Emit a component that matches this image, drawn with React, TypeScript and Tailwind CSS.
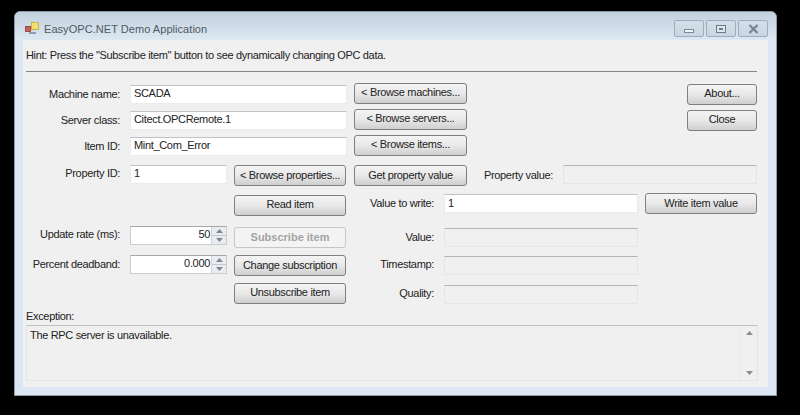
import React from 'react';

const Btn = ({ label, w = 'w-[113px]', top = '', disabled = false, lift = false }: { label: string; w?: string; top?: string; disabled?: boolean; lift?: boolean }) => (
  <div
    className={`${w} ${top} ${lift ? 'pb-[2px]' : ''} h-[21px] shrink-0 rounded-[3px] border flex items-center justify-center whitespace-nowrap ${
      disabled
        ? 'border-[#c4c6c8] bg-[#f3f3f3] text-[#a3a3a3] font-bold tracking-[0px]'
        : 'border-[#7f7f7f] bg-gradient-to-b from-[#f4f4f4] via-[#e8e8e8] to-[#cfcfcf] text-[#222]'
    }`}
  >
    {label}
  </div>
);

const Label = ({ text, w = 'w-[94px]', top = '' }: { text: string; w?: string; top?: string }) => (
  <div className={`${w} ${top} shrink-0 text-right whitespace-nowrap`}>{text}</div>
);

const Input = ({ value, w = 'w-[217px]', top = 'mt-[2px]', ml = 'ml-[10px]', line = 'leading-[17px]' }: { value: string; w?: string; top?: string; ml?: string; line?: string }) => (
  <div className={`${w} ${top} ${ml} ${line} h-[19px] shrink-0 bg-white border border-[#e9ecef] border-t-[#c0c2c5] px-[3px] text-[#222]`}>
    {value}
  </div>
);

const Field = ({ w = 'w-[194px]', top = '', ml = 'ml-[10px]' }: { w?: string; top?: string; ml?: string }) => (
  <div className={`${w} ${top} ${ml} h-[19px] shrink-0 bg-[#f0f0f0] border border-[#e6e6e6] border-t-[#b5b5b5]`} />
);

const Spin = ({ value, top = '' }: { value: string; top?: string }) => (
  <div className={`w-[97px] ${top} ml-[10px] h-[19px] shrink-0 flex bg-white border border-[#c9ccd0] border-t-[#a5a8ac]`}>
    <div className="flex-1 text-right leading-[15px] text-[#222] pr-[1px]">{value}</div>
    <div className="w-[15px] flex flex-col bg-[#e9edf1] border-l border-[#d0d4d8]">
      <div className="flex-1 flex items-center justify-center border-b border-[#c3c8cd]">
        <svg width="7" height="4" viewBox="0 0 7 4"><path d="M3.5 0 7 4H0z" fill="#7d8893" /></svg>
      </div>
      <div className="flex-1 flex items-center justify-center">
        <svg width="7" height="4" viewBox="0 0 7 4"><path d="M0 0h7L3.5 4z" fill="#7d8893" /></svg>
      </div>
    </div>
  </div>
);

const CaptionBtn = ({ children }: { children: React.ReactNode }) => (
  <div className="w-[30px] h-[17px] rounded-[2px] border border-[#9eadbc] bg-gradient-to-b from-[#d3dee8] to-[#c9d7e4] flex items-center justify-center">
    {children}
  </div>
);

export default function App() {
  return (
    <div className="w-[800px] h-[415px] bg-black overflow-hidden pt-[11px] pl-[14px] font-['Liberation_Sans',sans-serif] text-[11px] tracking-[-0.33px] leading-[15px]">
      {/* Window frame */}
      <div className="w-[763px] h-[385px] rounded-t-[6px] bg-[#dce7f3] border border-[#8b98a5] flex flex-col">
        {/* Title bar */}
        <div className="h-[28px] shrink-0 rounded-t-[6px] bg-gradient-to-b from-[#c2d0dd] to-[#dde8f2] flex items-start pl-[10px] pr-[8px]">
          <svg width="16" height="16" viewBox="0 0 16 16" className="mt-[9px] shrink-0">
            <rect x="0.5" y="5.5" width="5" height="5" fill="#c8605a" stroke="#a04a46" strokeWidth="1" />
            <rect x="6.5" y="1.5" width="7" height="7" fill="#efe070" stroke="#c4b44a" strokeWidth="1" />
            <rect x="4" y="11" width="7" height="2" fill="#8c9db8" />
          </svg>
          <div className="ml-[3px] mt-[10px] text-[#4d5965] text-[11px] tracking-[0.05px]">EasyOPC.NET Demo Application</div>
          <div className="ml-auto mt-[8px] flex gap-[2px]">
            <CaptionBtn>
              <div className="w-[10px] h-[4px] mt-[5px] bg-[#f2f5f8] border border-[#7d8996]" />
            </CaptionBtn>
            <CaptionBtn>
              <div className="w-[10px] h-[8px] border border-[#6f7b87] bg-[#dfe6ed] flex items-center justify-center">
                <div className="w-[4px] h-[2px] bg-[#6f7b87]" />
              </div>
            </CaptionBtn>
            <CaptionBtn>
              <svg width="11" height="10" viewBox="0 0 11 10">
                <path d="M1.5 1 9.5 9M9.5 1 1.5 9" stroke="#7a8693" strokeWidth="2.4" />
              </svg>
            </CaptionBtn>
          </div>
        </div>

        {/* Client area */}
        <div className="w-[745px] ml-[8px] h-[347px] shrink-0 bg-[#f0f0f0] pl-[3px] pr-[10px] text-[#222]">
          <div className="pt-[8px] h-[23px]">Hint: Press the "Subscribe item" button to see dynamically changing OPC data.</div>
          <div className="mt-[8px] h-[2px] w-[731px] border-t border-[#858585]" />

          {/* Machine, server, item rows + About / Close */}
          <div className="mt-[10px] flex">
            <div className="w-[441px] shrink-0">
              <div className="h-[26px] flex items-start">
                <Label text="Machine name:" top="mt-[4px]" />
                <Input value="SCADA" line="leading-[15px]" />
                <div className="ml-[7px]"><Btn label="< Browse machines..." lift /></div>
              </div>
              <div className="h-[26px] flex items-start">
                <Label text="Server class:" top="mt-[4px]" />
                <Input value="Citect.OPCRemote.1" line="leading-[15px]" />
                <div className="ml-[7px]"><Btn label="< Browse servers..." lift /></div>
              </div>
              <div className="h-[30px] flex items-start">
                <Label text="Item ID:" top="mt-[4px]" />
                <Input value="Mint_Com_Error" line="leading-[15px]" />
                <div className="ml-[7px]"><Btn label="< Browse items..." lift /></div>
              </div>
            </div>
            <div className="ml-[220px] flex flex-col gap-[5px] pt-[1px]">
              <Btn label="About..." w="w-[70px]" lift />
              <Btn label="Close" w="w-[70px]" lift />
            </div>
          </div>

          {/* Property row */}
          <div className="h-[28px] flex items-start">
            <Label text="Property ID:" top="mt-[1px]" />
            <Input value="1" w="w-[97px]" top="" line="leading-[15px]" />
            <div className="ml-[7px]"><Btn label="< Browse properties..." w="w-[112px]" /></div>
            <div className="ml-[8px]"><Btn label="Get property value" /></div>
            <Label text="Property value:" w="w-[86px]" top="mt-[3px]" />
            <Field top="mt-0" />
          </div>

          {/* Read / write row */}
          <div className="h-[33px] flex items-start">
            <div className="ml-[208px] mt-[2px]"><Btn label="Read item" w="w-[112px]" lift /></div>
            <Label text="Value to write:" w="w-[80px]" top="mt-[3px] ml-[8px]" />
            <Input value="1" w="w-[194px]" top="mt-[1px]" />
            <div className="ml-[7px]"><Btn label="Write item value" w="w-[112px]" /></div>
          </div>

          {/* Subscription rows */}
          <div className="h-[29px] flex items-start">
            <Label text="Update rate (ms):" top="mt-[1px]" />
            <Spin value="50" />
            <div className="ml-[7px] mt-[1px]"><Btn label="Subscribe item" w="w-[112px]" disabled /></div>
            <Label text="Value:" w="w-[80px]" top="mt-[4px] ml-[8px]" />
            <Field top="mt-[2px]" />
          </div>
          <div className="h-[28px] flex items-start">
            <Label text="Percent deadband:" top="mt-[2px]" />
            <Spin value="0.000" />
            <div className="ml-[7px]"><Btn label="Change subscription" w="w-[112px]" /></div>
            <Label text="Timestamp:" w="w-[80px]" top="mt-[2px] ml-[8px]" />
            <Field top="mt-[1px]" />
          </div>
          <div className="h-[30px] flex items-start">
            <div className="ml-[208px]"><Btn label="Unsubscribe item" w="w-[112px]" lift /></div>
            <Label text="Quality:" w="w-[80px]" top="mt-[3px] ml-[8px]" />
            <Field top="mt-[2px]" />
          </div>

          {/* Exception box */}
          <div className="h-[12px] leading-[12px] -mt-[3px] mb-[3px]">Exception:</div>
          <div className="w-[732px] h-[56px] border border-[#e4e4e4] border-t-[#c0c0c0] flex justify-between">
            <div className="pl-[3px] pt-[2px]">The RPC server is unavailable.</div>
            <div className="w-[17px] flex flex-col items-center justify-between py-[5px] border-l border-[#e9e9e9]">
              <svg width="7" height="4" viewBox="0 0 7 4"><path d="M3.5 0 7 4H0z" fill="#8b8b8b" /></svg>
              <svg width="7" height="4" viewBox="0 0 7 4"><path d="M0 0h7L3.5 4z" fill="#8b8b8b" /></svg>
            </div>
          </div>
        </div>
      </div>
    </div>
  );
}
